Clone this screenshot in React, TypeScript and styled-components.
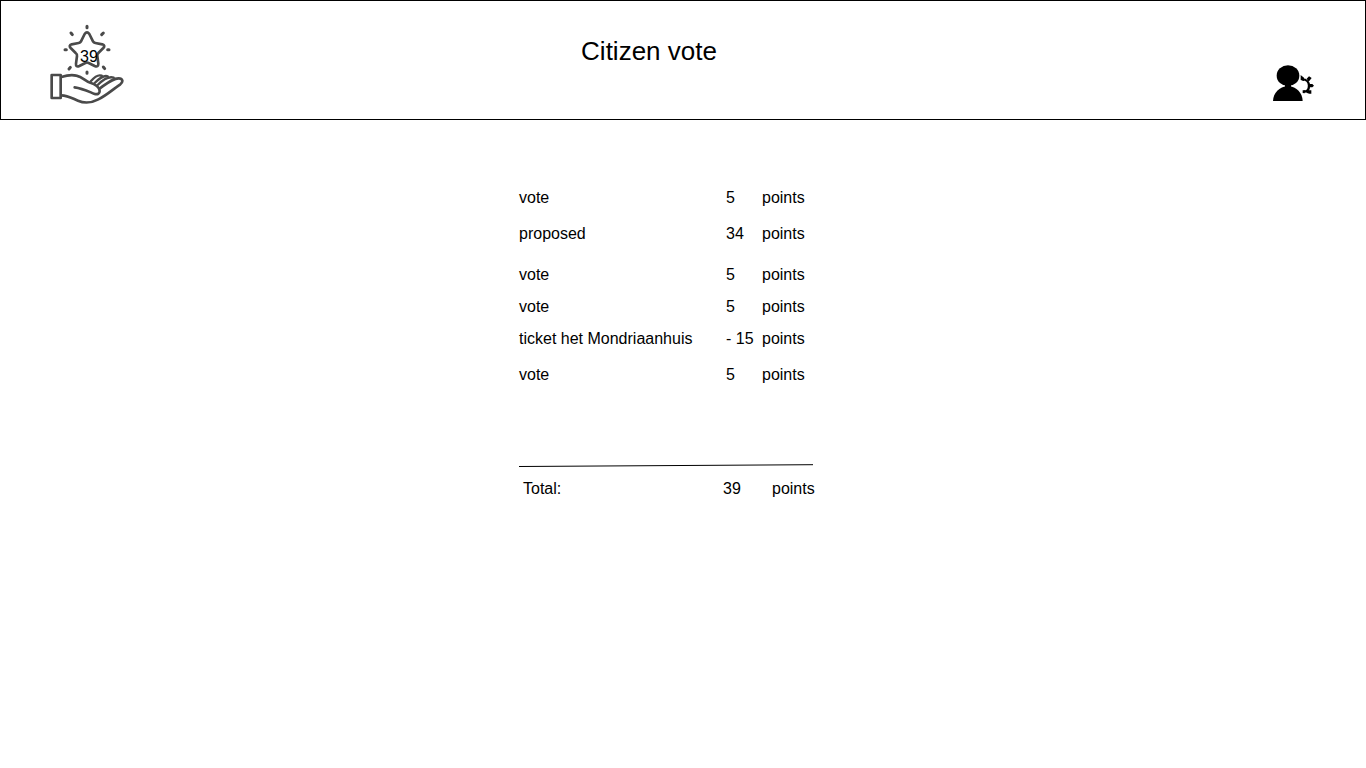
import React from 'react';
import styled, { createGlobalStyle } from 'styled-components';

const GlobalStyle = createGlobalStyle`
  *, *::before, *::after { box-sizing: border-box; }
  body {
    margin: 0;
    background: #fff;
    color: #000;
    font: 16px/20px "Liberation Sans", Arial, sans-serif;
  }
`;

const Header = styled.header`
  display: grid;
  grid-template-columns: 1fr auto 1fr;
  height: 120px;
  padding: 0 50px 0 49px;
  border: 1px solid #000;
`;

const PointsBadge = styled.div`
  position: relative;
  width: 75px;
  height: 81px;
  margin-top: 23px;
`;

const BadgeCount = styled.span`
  position: absolute;
  top: 23px;
  left: 30px;
`;

const Title = styled.h1`
  margin: 34px 67px 0 0;
  font-size: 26px;
  line-height: 32px;
  font-weight: 400;
`;

const ProfileButton = styled.button`
  justify-self: end;
  align-self: start;
  margin: 64px 0 0;
  padding: 0;
  border: 0;
  background: none;
  color: inherit;
  cursor: pointer;
`;

const Icon = styled.svg`
  display: block;
`;

const Ledger = styled.main`
  width: 328px;
  max-width: 100%;
  margin: 68px auto 0;
`;

const Entries = styled.table`
  border-collapse: collapse;
  table-layout: fixed;
  width: 100%;
`;

const Entry = styled.tr<{ $height: number }>`
  height: ${(p) => p.$height}px;
`;

const Cell = styled.td<{ $width?: number }>`
  width: ${(p) => (p.$width ? `${p.$width}px` : 'auto')};
  padding: 0;
  vertical-align: top;
  white-space: nowrap;
`;

const Rule = styled.svg`
  display: block;
  margin-top: 67px;
`;

const Total = styled.div`
  display: grid;
  grid-template-columns: 200px 49px auto;
  margin-top: 11px;
  padding-left: 4px;
`;

const entries = [
  { label: 'vote', points: '5', height: 36 },
  { label: 'proposed', points: '34', height: 41 },
  { label: 'vote', points: '5', height: 32 },
  { label: 'vote', points: '5', height: 32 },
  { label: 'ticket het Mondriaanhuis', points: '- 15', height: 36 },
  { label: 'vote', points: '5', height: 32 },
];

const RewardIcon = () => (
  <Icon width="75" height="81" viewBox="30 27 225 243" fill="none" stroke="#4a4a4a" strokeWidth="8" strokeLinecap="round" strokeLinejoin="round" aria-hidden="true">
    <path d="M134 57Q141 47 148 57L159 79Q161 83 166 84L187 88Q197 91 190 99L175 114Q171 118 172 123L175 146Q175 158 164 153L146 144Q141 141 136 144L118 153Q107 158 108 146L111 123Q112 118 107 114L92 99Q85 91 95 88L116 84Q121 83 123 79Z" />
    <g strokeWidth="9">
      <path d="M141 34V38M141 171V175M75 104H79M203 104H207M93 54L97 59M190 54L185 59M91 157L87 162M190 156L194 161" />
    </g>
    <path d="M35 180H62V249H35Z" />
    <path d="M64 186C80 181 93 178 109 182C129 186 135 198 151 203C166 207 179 218 179 228C179 236 173 239 164 237C140 227 127 220 104 217" />
    <path d="M64 241C83 241 97 250 114 257C134 266 154 264 175 253C200 241 220 222 241 208C251 200 248 190 236 190C218 190 202 204 180 220" />
    <path d="M153 198C165 184 174 178 185 182M164 204C180 188 193 180 203 184M173 210C192 191 206 183 221 188" strokeWidth="7" />
  </Icon>
);

const ProfileIcon = () => (
  <Icon width="42" height="38" viewBox="24 21 126 114" aria-hidden="true">
    <ellipse cx="69" cy="53" rx="34" ry="31" />
    <path d="M24 129C25 105 42 86 69 84C96 86 112 105 113 129Z" />
    <path d="M60 78H78V90H60Z" />
    <path d="M112 64C125 64 132 73 132 83C132 94 126 101 116 101" fill="none" stroke="#000" strokeWidth="7" />
    <path d="M107 51L117 59V69L107 66ZM125 62L132 55L140 60L131 71ZM133 78H142L147 83L142 88H133ZM128 97L139 97V107H133L124 104ZM113 97L120 97L119 106L113 105Z" />
  </Icon>
);

export default function App() {
  return (
    <>
      <GlobalStyle />
      <Header>
        <PointsBadge>
          <RewardIcon />
          <BadgeCount>39</BadgeCount>
        </PointsBadge>
        <Title>Citizen vote</Title>
        <ProfileButton type="button" aria-label="Profile settings">
          <ProfileIcon />
        </ProfileButton>
      </Header>
      <Ledger>
        <Entries>
          <tbody>
            {entries.map((entry, i) => (
              <Entry key={i} $height={entry.height}>
                <Cell $width={207}>{entry.label}</Cell>
                <Cell $width={36}>{entry.points}</Cell>
                <Cell>points</Cell>
              </Entry>
            ))}
          </tbody>
        </Entries>
        <Rule width="294" height="4" viewBox="0 0 294 4" aria-hidden="true">
          <line x1="0" y1="2.5" x2="294" y2="0.7" stroke="#000" />
        </Rule>
        <Total>
          <span>Total:</span>
          <span>39</span>
          <span>points</span>
        </Total>
      </Ledger>
    </>
  );
}
